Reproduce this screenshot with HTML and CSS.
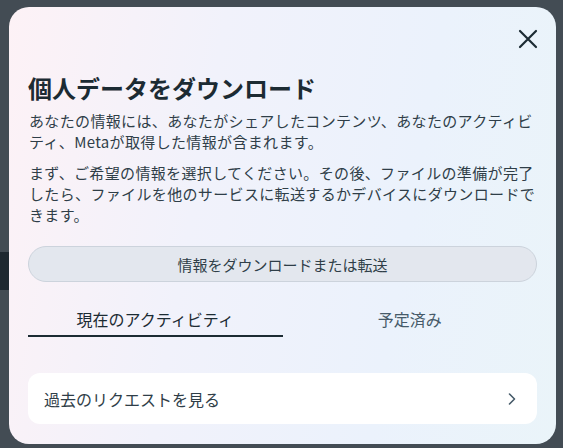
FILE: index.html
```html
<!DOCTYPE html>
<html lang="ja">
<head>
<meta charset="utf-8">
<link rel="stylesheet" href="styles.css">
</head>
<body>
<div class="backdrop-band"></div>
<div class="modal">
  <div class="top-row">
    <button class="close" aria-label="閉じる">
      <svg width="20" height="20" viewBox="0 0 20 20"><path d="M2 2 L18 18 M18 2 L2 18" stroke="#1c2b33" stroke-width="2.2" stroke-linecap="round" fill="none"/></svg>
    </button>
  </div>
  <h1 class="title">個人データをダウンロード</h1>
  <p class="desc">あなたの情報には、あなたがシェアしたコンテンツ、あなたのアクティビティ、Metaが取得した情報が含まれます。</p>
  <p class="desc second">まず、ご希望の情報を選択してください。その後、ファイルの準備が完了したら、ファイルを他のサービスに転送するかデバイスにダウンロードできます。</p>
  <button class="pill">情報をダウンロードまたは転送</button>
  <div class="tabs">
    <div class="tab active">現在のアクティビティ</div>
    <div class="tab">予定済み</div>
  </div>
  <div class="card">
    <span>過去のリクエストを見る</span>
    <svg width="10" height="14" viewBox="0 0 10 14"><path d="M2.5 2 L7.5 7 L2.5 12" stroke="#465a69" stroke-width="1.6" fill="none" stroke-linecap="round" stroke-linejoin="round"/></svg>
  </div>
</div>
</body>
</html>
```
FILE: styles.css
```css
html, body {
  margin: 0;
  padding: 0;
}
body {
  width: 563px;
  height: 448px;
  background: #434c54;
  font-family: "Noto Sans CJK JP", "Noto Sans", sans-serif;
  overflow: hidden;
  position: relative;
}
.backdrop-band {
  position: absolute;
  left: 0;
  top: 252px;
  width: 12px;
  height: 38px;
  background: #1e2830;
}
.modal {
  position: relative;
  margin: 7px 0 0 9px;
  width: 547px;
  height: 437px;
  box-sizing: border-box;
  border-radius: 20px;
  background: linear-gradient(100deg, #fdf2f6 0%, #f1f2fb 35%, #ebf2fc 70%, #eaf4f9 100%);
  padding: 20px 19px 0 19px;
  color: #1c2b33;
}
.top-row {
  display: flex;
  justify-content: flex-end;
  height: 24px;
}
.close {
  width: 24px;
  height: 24px;
  margin-right: -3px;
  padding: 0;
  border: 0;
  background: none;
  display: flex;
  align-items: center;
  justify-content: center;
}
.title {
  margin: 21px 0 0 0;
  font-size: 24px;
  line-height: 32px;
  font-weight: 700;
  letter-spacing: 0;
  color: #1c2b33;
}
.desc {
  margin: 6px 0 0 1px;
  font-size: 15px;
  line-height: 21px;
  letter-spacing: 0.35px;
  line-break: strict;
  color: #2f3e48;
}
.desc.second {
  margin-top: 10px;
}
.pill {
  display: block;
  width: 100%;
  height: 36px;
  margin-top: 21px;
  border-radius: 18px;
  border: 1px solid #ccd3dc;
  background: #e3e7ee;
  font-family: inherit;
  font-size: 15px;
  color: #2f3e48;
  padding: 0;
}
.tabs {
  display: flex;
  margin-top: 19px;
}
.tab {
  flex: 1;
  text-align: center;
  font-size: 16px;
  line-height: 21px;
  padding: 8px 0 5px;
  color: #465a69;
  border-bottom: 2px solid transparent;
}
.tab.active {
  color: #1c2b33;
  border-bottom-color: #1c2b33;
}
.card {
  margin-top: 36px;
  height: 51px;
  background: #ffffff;
  border-radius: 12px;
  display: flex;
  align-items: center;
  justify-content: space-between;
  padding: 0 20px 0 16px;
  font-size: 16px;
  color: #2f3e48;
}
```
